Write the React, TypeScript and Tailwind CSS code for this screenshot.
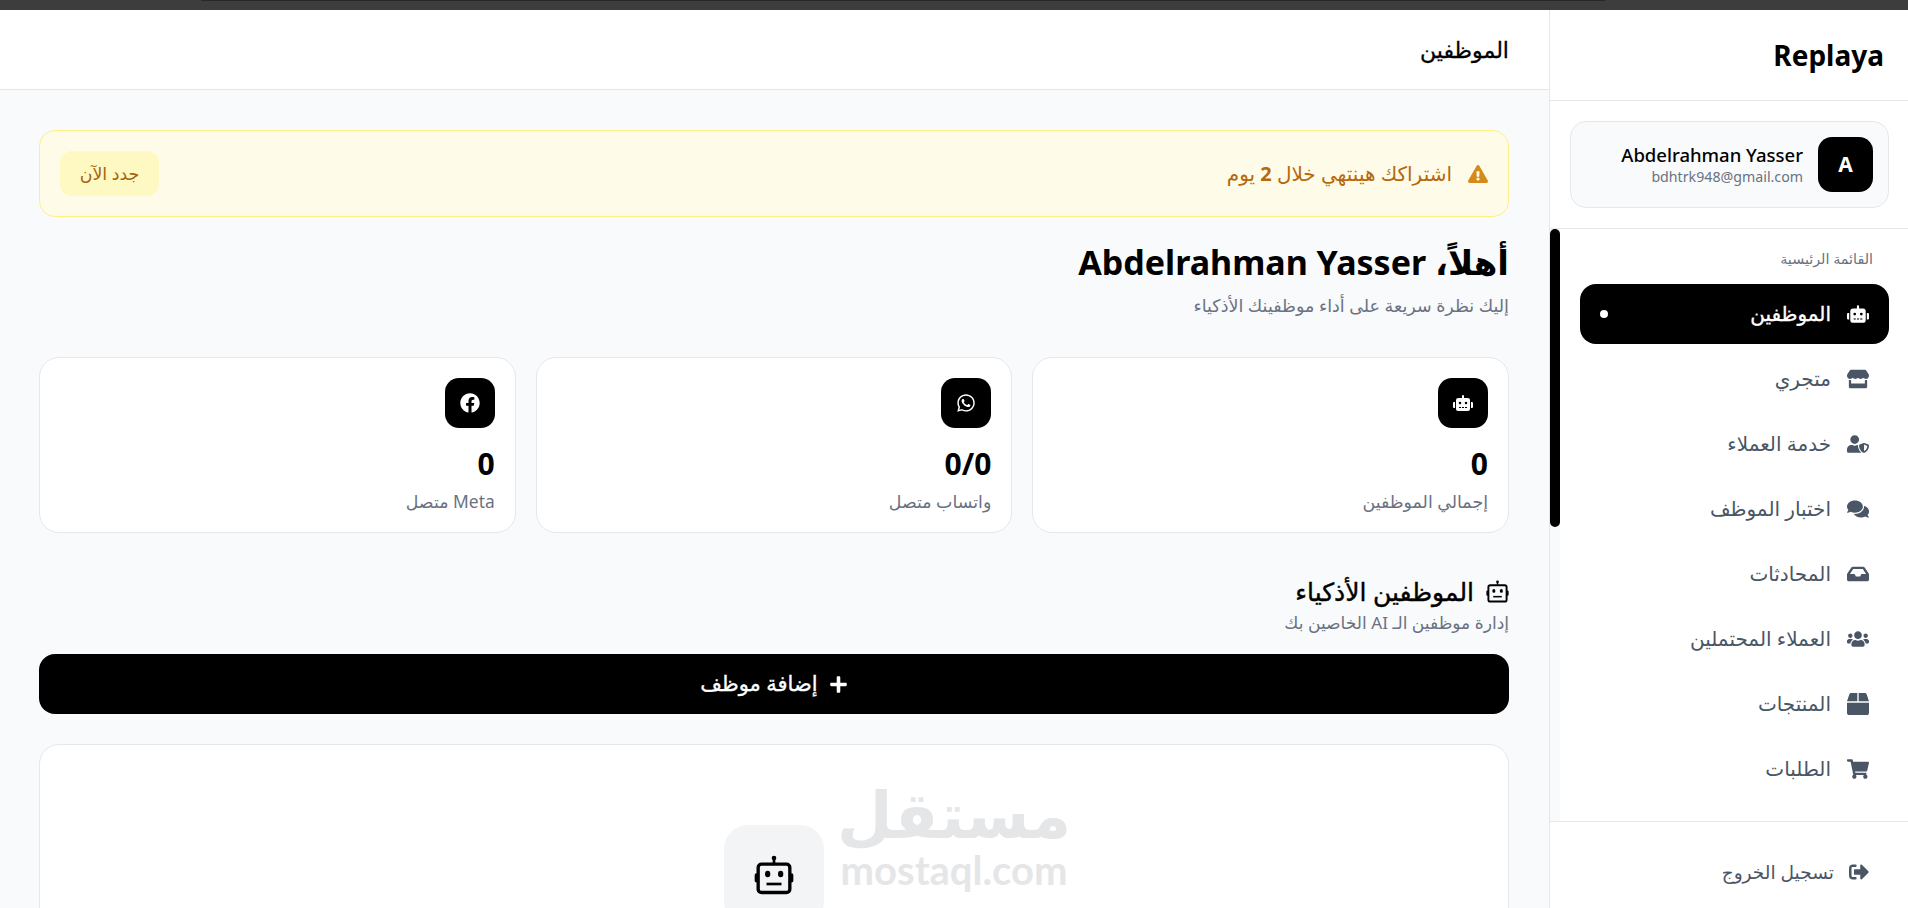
import React from 'react'
import {
  FaRobot,
  FaStore,
  FaUserShield,
  FaComments,
  FaInbox,
  FaUsers,
  FaBox,
  FaShoppingCart,
  FaSignOutAlt,
  FaExclamationTriangle,
  FaFacebook,
  FaWhatsapp,
  FaPlus,
} from 'react-icons/fa'

function BotIcon({ size }: { size: number }) {
  return (
    <svg width={size} height={size} viewBox="0 0 24 24" fill="none" stroke="currentColor">
      <circle cx="12" cy="1.8" r="1.4" fill="currentColor" stroke="none" />
      <path d="M12 2v3" strokeWidth="1.6" />
      <rect x="2.5" y="5.5" width="19" height="17" rx="2" strokeWidth="2" />
      <rect x="0.4" y="11" width="2" height="5.5" rx="1" fill="currentColor" stroke="none" />
      <rect x="21.6" y="11" width="2" height="5.5" rx="1" fill="currentColor" stroke="none" />
      <ellipse cx="8.2" cy="11.4" rx="1.6" ry="2" fill="currentColor" stroke="none" />
      <ellipse cx="16" cy="11.4" rx="1.6" ry="2" fill="currentColor" stroke="none" />
      <path d="M7.5 17.4h9" strokeWidth="1.6" />
    </svg>
  )
}

const navItems = [
  { label: 'الموظفين', icon: FaRobot, active: true },
  { label: 'متجري', icon: FaStore },
  { label: 'خدمة العملاء', icon: FaUserShield },
  { label: 'اختبار الموظف', icon: FaComments },
  { label: 'المحادثات', icon: FaInbox },
  { label: 'العملاء المحتملين', icon: FaUsers },
  { label: 'المنتجات', icon: FaBox },
  { label: 'الطلبات', icon: FaShoppingCart },
]

const stats = [
  { label: 'إجمالي الموظفين', value: '0', icon: FaRobot, size: 20 },
  { label: 'واتساب متصل', value: '0/0', icon: FaWhatsapp, size: 20 },
  { label: 'Meta متصل', value: '0', icon: FaFacebook, size: 20 },
]

function Sidebar() {
  return (
    <aside className="w-[359px] shrink-0 h-full bg-white border-l border-gray-200 flex flex-col">
      <div className="h-[91px] shrink-0 border-b border-gray-200 flex items-center pr-[24px]">
        <h1 className="text-[28px] font-bold text-black" dir="ltr">
          Replaya
        </h1>
      </div>

      <div className="h-[128px] shrink-0 border-b border-gray-200 py-[20px] pr-[19px] pl-[20px]">
        <div className="h-[87px] bg-gray-50 border border-gray-200 rounded-2xl flex items-center gap-[15px] px-[15px]">
          <div className="w-[55px] h-[55px] rounded-[14px] bg-black text-white flex items-center justify-center text-[21px] font-bold">
            A
          </div>
          <div className="flex flex-col">
            <span className="text-[18.5px] leading-[24px] font-medium text-black">Abdelrahman Yasser</span>
            <span className="text-[14.2px] leading-[20px] text-gray-500">bdhtrk948@gmail.com</span>
          </div>
        </div>
      </div>

      <div className="flex-1 flex min-h-0">
        <nav className="flex-1 pt-[20px] pr-[19px] pl-[20px]">
          <p className="h-[20px] mb-[15px] pr-[16px] text-[14.3px] leading-[20px] text-gray-500">القائمة الرئيسية</p>
          <ul className="flex flex-col gap-[5px]">
            {navItems.map((item) => {
              const Icon = item.icon
              return (
                <li
                  key={item.label}
                  className={
                    item.active
                      ? 'h-[60px] rounded-2xl bg-black text-white flex items-center gap-[16px] px-[20px]'
                      : 'h-[60px] rounded-2xl text-gray-600 flex items-center gap-[16px] px-[20px]'
                  }
                >
                  <Icon size={22} />
                  <span className={item.active ? 'text-[20px] [-webkit-text-stroke:0.35px]' : 'text-[20px]'}>
                    {item.label}
                  </span>
                  {item.active && <span className="w-2 h-2 rounded-full bg-white mr-auto" />}
                </li>
              )
            })}
          </ul>
        </nav>
        <div className="w-[10px] shrink-0 bg-gray-50">
          <div className="h-[298px] rounded-full bg-black" />
        </div>
      </div>

      <div className="h-[87px] shrink-0 border-t border-gray-200 flex items-center gap-[15px] pr-[39px] pt-[14px] text-gray-600">
        <FaSignOutAlt size={20} />
        <span className="text-[18.6px]">تسجيل الخروج</span>
      </div>
    </aside>
  )
}

function Main() {
  return (
    <main className="relative flex-1 min-w-0 h-full bg-gray-50 flex flex-col overflow-hidden">
      <header className="h-[80px] shrink-0 bg-white border-b border-gray-200 flex items-center pr-[40px]">
        <h2 className="text-[22px] text-black [-webkit-text-stroke:0.3px]">الموظفين</h2>
      </header>

      <div className="pr-[40px] pl-[39px] pt-[40px] flex flex-col">
        <div className="h-[87px] bg-yellow-50 border border-yellow-200 rounded-2xl flex items-center justify-between px-[20px]">
          <div className="flex items-center gap-[16px] text-[20px] text-[#b4690e]">
            <FaExclamationTriangle size={20} className="text-[#d68a1c]" />
            <span>
              اشتراكك هينتهي خلال <b>2</b> يوم
            </span>
          </div>
          <button className="w-[99px] h-[45px] rounded-xl bg-yellow-100 text-[#a8620c] text-[17.4px]">جدد الآن</button>
        </div>

        <h3 className="mt-[20px] text-[34px] leading-[50px] font-bold text-black">أهلاً، Abdelrahman Yasser</h3>
        <p className="mt-[6px] text-[17.5px] leading-[24px] text-gray-500">إليك نظرة سريعة على أداء موظفينك الأذكياء</p>

        <div className="mt-[40px] grid grid-cols-3 gap-[20px]">
          {stats.map((s) => {
            const Icon = s.icon
            return (
              <div key={s.label} className="h-[176px] bg-white border border-gray-200 rounded-[20px] p-[20px]">
                <div className="w-[50px] h-[50px] rounded-[14px] bg-black text-white flex items-center justify-center">
                  <Icon size={s.size} />
                </div>
                <div className="mt-[16px] text-[30px] leading-[40px] font-bold text-black">{s.value}</div>
                <div className="mt-[5px] text-[17.4px] leading-[24px] text-gray-500">{s.label}</div>
              </div>
            )
          })}
        </div>

        <div className="mt-[40px] flex items-center gap-[12px] text-black">
          <BotIcon size={23} />
          <h3 className="text-[25px] leading-[36px] [-webkit-text-stroke:0.4px]">الموظفين الأذكياء</h3>
        </div>
        <p className="mt-[3px] text-[17.1px] leading-[22px] text-gray-500">إدارة موظفين الـ AI الخاصين بك</p>

        <button className="mt-[20px] h-[60px] rounded-2xl bg-black text-white flex items-center justify-center gap-[11px] text-[21px] [-webkit-text-stroke:0.35px]">
          <FaPlus size={19} />
          إضافة موظف
        </button>

        <div className="mt-[30px] h-[400px] bg-white border border-gray-200 rounded-[20px] flex flex-col items-center pt-[80px]">
          <div className="w-[100px] h-[100px] rounded-3xl bg-gray-100 text-black flex items-center justify-center">
            <BotIcon size={40} />
          </div>
        </div>
      </div>

      {/* watermark */}
      <div className="absolute left-[840px] top-[769px] w-[228px] flex flex-col items-center text-[#e5e6e8] pointer-events-none">
        <span className="h-[73px] text-[64px] leading-[70px] font-bold">مستقل</span>
        <span className="h-[36px] text-[40px] leading-[36px] font-bold font-['Lato',sans-serif]" dir="ltr">
          mostaql.com
        </span>
      </div>
    </main>
  )
}

export default function App() {
  return (
    <div
      dir="rtl"
      className="w-[1908px] h-[908px] overflow-hidden flex flex-col font-['Noto_Sans','DejaVu_Sans',sans-serif]"
    >
      <div className="h-[10px] shrink-0 bg-[#3d3d3d] flex" dir="ltr">
        <div className="w-[201px]" />
        <div className="flex-1 h-px bg-[#26262b]" />
        <div className="w-[303px]" />
      </div>
      <div className="flex-1 min-h-0 flex">
        <Sidebar />
        <Main />
      </div>
    </div>
  )
}
